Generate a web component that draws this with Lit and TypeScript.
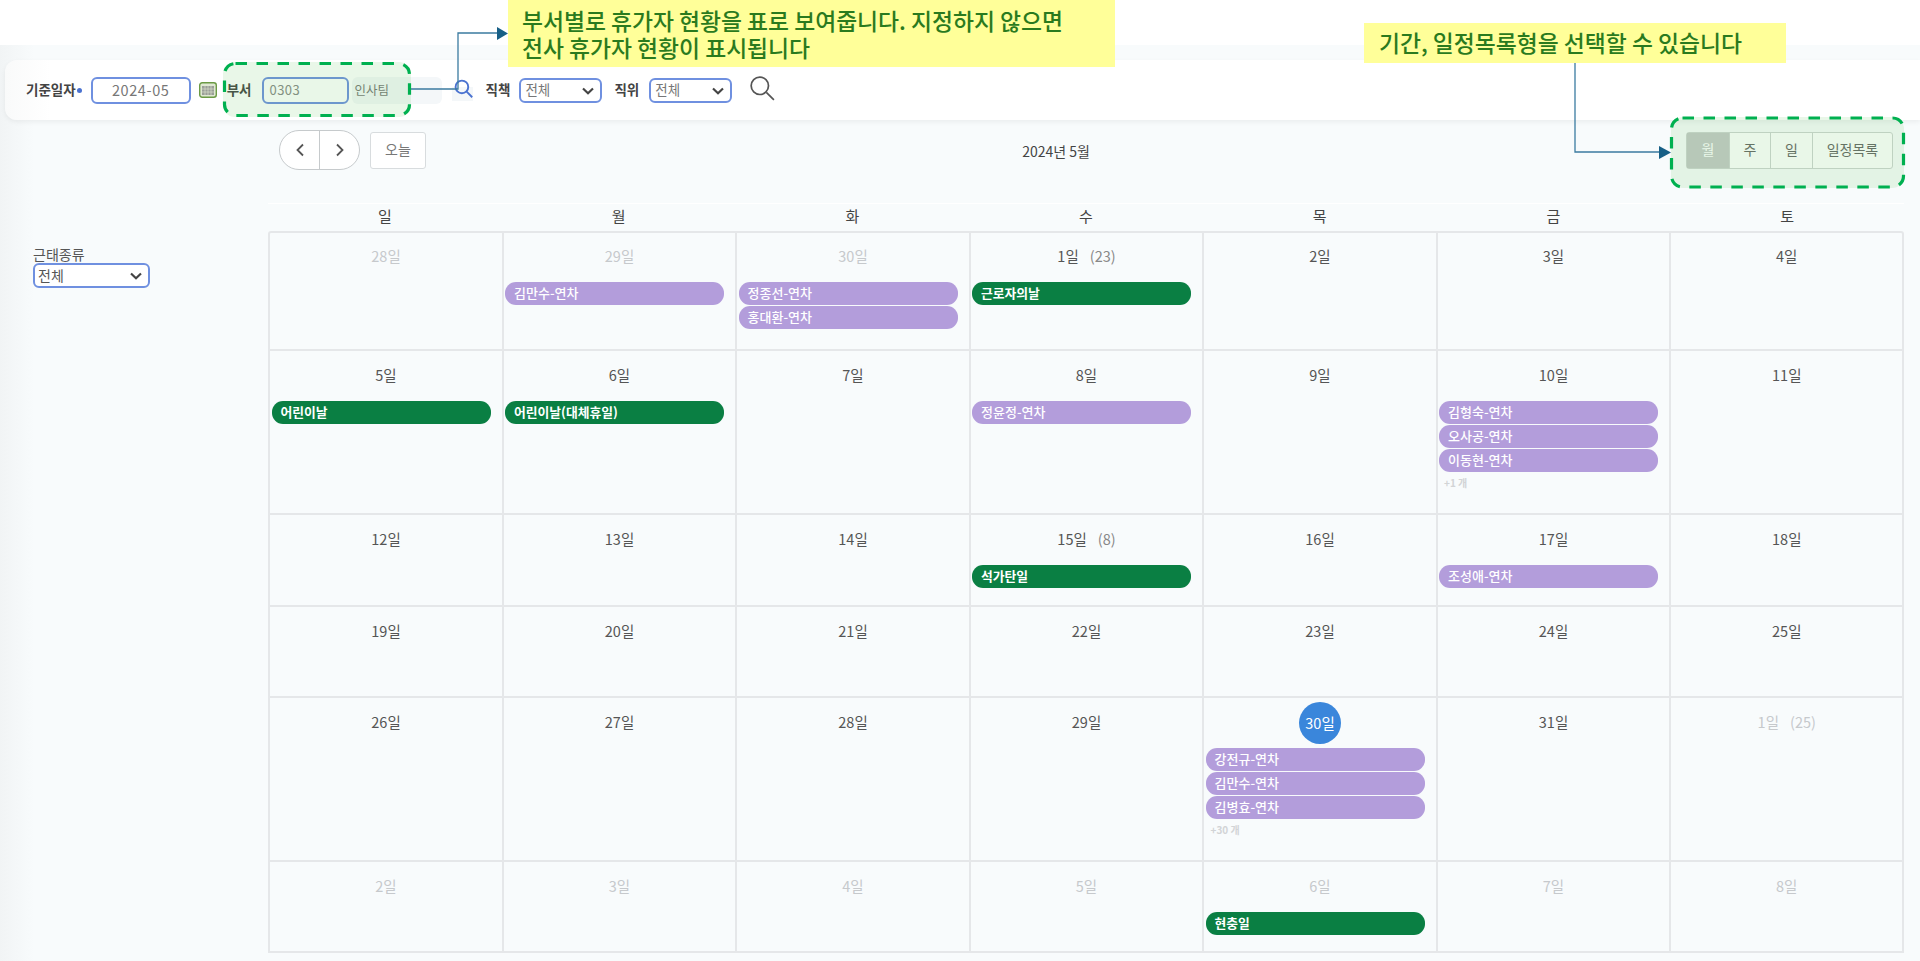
import { LitElement, html, css, svg } from "lit";
import { customElement } from "lit/decorators.js";

type Ev = { t: string; g?: boolean };
type Day = { d: string; muted?: boolean; today?: boolean; count?: string; ev?: Ev[]; more?: string };
const L = (n: string): Ev => ({ t: `${n}-연차` });
const H = (n: string): Ev => ({ t: n, g: true });

const days: Day[] = [
  { d: "28일", muted: true }, { d: "29일", muted: true, ev: [L("김만수")] }, { d: "30일", muted: true, ev: [L("정종선"), L("홍대환")] },
  { d: "1일", count: "(23)", ev: [H("근로자의날")] }, { d: "2일" }, { d: "3일" }, { d: "4일" },
  { d: "5일", ev: [H("어린이날")] }, { d: "6일", ev: [H("어린이날(대체휴일)")] }, { d: "7일" }, { d: "8일", ev: [L("정윤정")] }, { d: "9일" },
  { d: "10일", ev: [L("김형숙"), L("오사공"), L("이동현")], more: "+1 개" }, { d: "11일" },
  { d: "12일" }, { d: "13일" }, { d: "14일" }, { d: "15일", count: "(8)", ev: [H("석가탄일")] }, { d: "16일" }, { d: "17일", ev: [L("조성애")] }, { d: "18일" },
  { d: "19일" }, { d: "20일" }, { d: "21일" }, { d: "22일" }, { d: "23일" }, { d: "24일" }, { d: "25일" },
  { d: "26일" }, { d: "27일" }, { d: "28일" }, { d: "29일" },
  { d: "30일", today: true, ev: [L("강전규"), L("김만수"), L("김병효")], more: "+30 개" }, { d: "31일" }, { d: "1일", muted: true, count: "(25)" },
  { d: "2일", muted: true }, { d: "3일", muted: true }, { d: "4일", muted: true }, { d: "5일", muted: true },
  { d: "6일", muted: true, ev: [H("현충일")] }, { d: "7일", muted: true }, { d: "8일", muted: true },
];

const chevron = html`<svg class="chev" viewBox="0 0 12 8" width="12" height="8"><path d="M1 1.5 6 6.2 11 1.5" fill="none" stroke="#444" stroke-width="2.2"/></svg>`;
const lens = (size: number, color: string, sw: number) => html`<svg viewBox="0 0 24 24" width=${size} height=${size}><circle cx="10" cy="10" r="8" fill="none" stroke=${color} stroke-width=${sw}/><path d="M16 16 23 23" stroke=${color} stroke-width=${sw} fill="none"/></svg>`;

@customElement("app-root")
export class AppRoot extends LitElement {
  static styles = css`
    :host { display: block; position: relative; width: 1920px; height: 961px; overflow: hidden; background: #fff;
      font-family: "Noto Sans CJK KR", "Noto Sans", sans-serif; color: #444; font-size: 14px; }
    .page { margin-top: 45px; height: 916px; padding-top: 15px; box-sizing: border-box;
      background: linear-gradient(90deg, #f1f4f5 0, #f8fbfc 34px); }
    .search { margin-left: 5px; height: 60px; background: linear-gradient(90deg, #f9fafa 0, #fff 45px); border-radius: 12px 0 0 12px; display: flex; align-items: center;
      box-shadow: 0 2px 5px rgba(0,0,0,.06); padding-left: 21px; box-sizing: border-box; }
    .lbl { font-size: 13.5px; font-weight: 700; color: #444; white-space: nowrap; margin-bottom: 3px; }
    .req { width: 5px; height: 5px; border-radius: 50%; background: #4a72d0; margin: 0 9px 0 1px; }
    .field { height: 27px; box-sizing: border-box; border: 2px solid #6f90e0; border-radius: 6px; background: #fff; display: flex; align-items: center; color: #666; font-size: 14.5px; padding-bottom: 2px; }
    .date { width: 100px; justify-content: center; letter-spacing: .6px; color: #777; }
    .cal { margin: 0 10px 0 8px; flex: none; }
    .code { width: 87px; padding-left: 6px; margin-left: 10px; font-size: 13px; color: #888; letter-spacing: .4px; }
    .ro { width: 90px; height: 27px; margin-left: 3px; padding: 0 0 2px 3px; box-sizing: border-box; background: #f4f7f9; border-radius: 6px; display: flex; align-items: center; font-size: 12.5px; color: #777; }
    .glass { width: 21px; height: 22px; margin-left: 10px; padding-left: 2px; box-sizing: border-box; display: flex; background: linear-gradient(180deg, transparent 8px, #f4f7f9 8px); }
    .sel { width: 83px; height: 25px; padding: 0 6px 2px 4px; justify-content: space-between; font-size: 13.5px; color: #777; }
    .sel.dark { color: #555; }
    .chev { margin-top: 3px; }
    .m1 { margin-left: 13px; margin-right: 9px; }
    .m2 { margin-left: 12px; margin-right: 10px; }
    .big { margin-left: 17px; margin-bottom: 4px; display: flex; }
    .main { display: flex; }
    aside { width: 268px; box-sizing: border-box; padding: 125px 0 0 33px; flex: none; }
    .alabel { font-size: 14px; line-height: 18px; color: #555; height: 9px; }
    aside .sel { width: 117px; margin-top: 9px; padding-left: 3px; font-size: 14px; color: #555; }
    .content { width: 1636px; flex: none; }
    .bar { height: 83px; box-sizing: border-box; padding: 10px 11px 0; display: flex; justify-content: space-between; align-items: flex-start; }
    .left { display: flex; gap: 10px; align-items: center; }
    .nav { width: 81px; height: 40px; box-sizing: border-box; border: 1px solid #c6cacc; border-radius: 20px; display: flex; background: #fff; }
    .nav span { flex: 1; display: flex; align-items: center; justify-content: center; }
    .nav span + span { border-left: 1px solid #c6cacc; }
    .today { width: 56px; height: 37px; box-sizing: border-box; border: 1px solid #d8dcde; border-radius: 3px; background: #fff; display: flex; align-items: center; justify-content: center; font-size: 14px; color: #777; padding-bottom: 3px; }
    .title { font-size: 14px; color: #444; margin-top: 11px; }
    .views { display: flex; height: 37px; margin-top: 2px; box-sizing: border-box; border: 1px solid #cfd4d2; border-radius: 3px; background: #fff; font-size: 14px; color: #666; }
    .views span { display: flex; align-items: center; justify-content: center; padding-bottom: 4px; box-sizing: border-box; border-left: 1px solid #cfd4d2; }
    .views span:first-child { border-left: 0; background: #c5c9c7; color: #fff; width: 42px; }
    .views span:nth-child(2) { width: 41px; }
    .views span:nth-child(3) { width: 42px; }
    .views span:nth-child(4) { width: 80px; }
    .heads { display: grid; grid-template-columns: repeat(7, 1fr); height: 28px; box-sizing: border-box; border-top: 1px solid #fff; }
    .heads div { text-align: center; font-size: 15px; line-height: 23px; color: #444; }
    .grid { display: grid; grid-template-columns: repeat(6, 233.5px) 1fr; grid-template-rows: 118px 164px 92px 91px 164px 89px;
      border: 2px solid #e5e7e9; border-radius: 3px 3px 0 0; width: 1636px; box-sizing: border-box; }
    .cell { border-right: 2px solid #e5e7e9; border-bottom: 2px solid #e5e7e9; box-sizing: border-box; padding: 0 0 0 1.5px; min-width: 0; }
    .cell:nth-child(7n) { border-right: 0; }
    .cell:nth-last-child(-n+7) { border-bottom: 0; }
    .num { height: 50px; display: flex; justify-content: center; align-items: flex-start; gap: 11px; padding-top: 14px; padding-right: 1px; box-sizing: border-box; font-size: 14.5px; line-height: 20px; color: #555; }
    .cell:nth-child(-n+7) .num { height: 49px; padding-top: 13px; }
    .muted .num { color: #c6c9cc; }
    .cnt { color: #888; }
    .muted .cnt { color: #c6c9cc; }
    .num .circle { width: 42px; height: 42px; margin-top: -10px; border-radius: 50%; background: #3a86db; color: #fff; display: flex; align-items: center; justify-content: center; }
    .ev { width: 219px; height: 22.5px; margin-bottom: 1.5px; border-radius: 11px; background: #b39ddb; color: #fff; font-size: 13px; font-weight: 500; line-height: 21px; padding-left: 9px; box-sizing: border-box; white-space: nowrap; }
    .ev.g { background: #0a7f43; font-weight: 700; font-size: 12.8px; }
    .more { font-size: 10px; font-weight: 700; color: #d2d4d6; padding: 3px 0 0 5px; line-height: 14px; }
    .hl { position: absolute; background: rgba(100,200,90,.14); border-radius: 12px; }
    .h1 { left: 223px; top: 62px; width: 188px; height: 55px; }
    .h2 { left: 1671px; top: 117px; width: 233px; height: 71px; }
    .note { position: absolute; background: #ffff99; color: #2a7a1e; font-size: 22.8px; font-weight: 500; line-height: 27px; box-sizing: border-box; white-space: nowrap; }
    .n1 { left: 508px; top: 0; width: 607px; height: 67px; padding: 7px 0 0 14px; }
    .n2 { left: 1364px; top: 23px; width: 422px; height: 40px; padding: 6px 0 0 15px; }
    .lines { position: absolute; left: 0; top: 0; pointer-events: none; }
  `;

  render() {
    return html`
      <div class="page">
        <div class="search">
          <span class="lbl">기준일자</span><span class="req"></span>
          <div class="field date">2024-05</div>
          <svg class="cal" viewBox="0 0 18 16" width="18" height="16"><rect x=".7" y=".7" width="16.6" height="14.6" rx="2.5" fill="#dfe8d2" stroke="#6b9a45" stroke-width="1.4"/><rect x="3" y="4" width="12" height="9" fill="#9a9f98"/><path d="M3 7h12M3 10h12M6 4v9M9 4v9M12 4v9" stroke="#dfe8d2" stroke-width=".6"/></svg>
          <span class="lbl">부서</span>
          <div class="field code">0303</div>
          <div class="ro">인사팀</div>
          <div class="glass">${lens(19, "#4a72d0", 2.4)}</div>
          <span class="lbl m1">직책</span>
          <div class="field sel">전체 ${chevron}</div>
          <span class="lbl m2">직위</span>
          <div class="field sel">전체 ${chevron}</div>
          <div class="big">${lens(26, "#555", 1.6)}</div>
        </div>
        <div class="main">
          <aside>
            <div class="alabel">근태종류</div>
            <div class="field sel dark">전체 ${chevron}</div>
          </aside>
          <div class="content">
            <div class="bar">
              <div class="left">
                <div class="nav">
                  <span><svg viewBox="0 0 10 14" width="10" height="14"><path d="M8 1.5 2.5 7 8 12.5" fill="none" stroke="#555" stroke-width="1.8"/></svg></span>
                  <span><svg viewBox="0 0 10 14" width="10" height="14"><path d="M2 1.5 7.5 7 2 12.5" fill="none" stroke="#555" stroke-width="1.8"/></svg></span>
                </div>
                <div class="today">오늘</div>
              </div>
              <div class="title">2024년 5월</div>
              <div class="views"><span>월</span><span>주</span><span>일</span><span>일정목록</span></div>
            </div>
            <div class="heads">${["일", "월", "화", "수", "목", "금", "토"].map((d) => html`<div>${d}</div>`)}</div>
            <div class="grid">
              ${days.map((c) => html`
                <div class="cell ${c.muted ? "muted" : ""}">
                  <div class="num">
                    ${c.today ? html`<span class="circle">${c.d}</span>` : html`<span>${c.d}</span>`}
                    ${c.count ? html`<span class="cnt">${c.count}</span>` : ""}
                  </div>
                  ${(c.ev || []).map((e) => html`<div class="ev ${e.g ? "g" : ""}">${e.t}</div>`)}
                  ${c.more ? html`<div class="more">${c.more}</div>` : ""}
                </div>`)}
            </div>
          </div>
        </div>
      </div>
      <div class="hl h1"></div>
      <div class="hl h2"></div>
      <svg class="lines" width="1920" height="961">
        ${svg`<rect x="224.5" y="63.5" width="185" height="52" rx="11" fill="none" stroke="#00b050" stroke-width="3.2" stroke-dasharray="11.5 9.5"/>
        <rect x="1671.5" y="118" width="232" height="69" rx="11" fill="none" stroke="#00b050" stroke-width="3.2" stroke-dasharray="11.5 9.5"/>
        <path d="M411 89H458V33H498" fill="none" stroke="#3b7ba0" stroke-width="1.3"/>
        <path d="M497 27 508 33.5 497 40Z" fill="#175f86"/>
        <path d="M1575 63V152H1661" fill="none" stroke="#3b7ba0" stroke-width="1.3"/>
        <path d="M1659 146 1671 152.5 1659 159Z" fill="#175f86"/>`}
      </svg>
      <div class="note n1">부서별로 휴가자 현황을 표로 보여줍니다. 지정하지 않으면<br />전사 휴가자 현황이 표시됩니다</div>
      <div class="note n2">기간, 일정목록형을 선택할 수 있습니다</div>
    `;
  }
}
